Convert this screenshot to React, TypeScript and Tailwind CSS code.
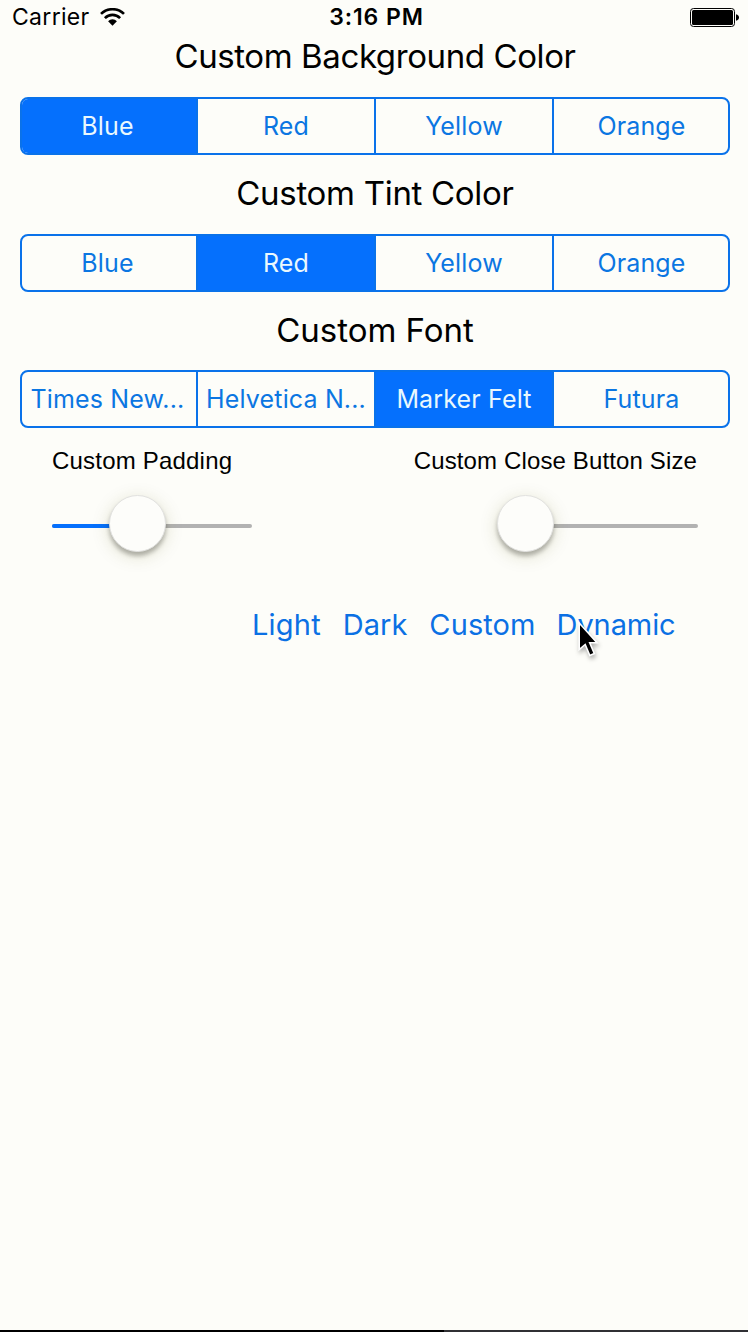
import React from "react";

type SegmentedProps = { items: string[]; selected: number };

function Segmented({ items, selected }: SegmentedProps) {
  return (
    <div className="mx-5 flex h-[58px] w-[710px] shrink-0 overflow-hidden rounded-[8px] border-2 border-[#0a72ea]">
      {items.map((item, i) => (
        <button
          key={item}
          className={
            "flex h-full items-center justify-center whitespace-nowrap text-[25px] leading-none tracking-[0.15px] " +
            (i === 0 ? "w-[174px] pr-[3px] " : i === 3 ? "w-[176px] border-l-2 border-[#0a72ea] pl-px " : "w-[178px] border-l-2 border-[#0a72ea] ") +
            (i === selected ? "bg-[#0570fd] text-[#eaf8fd]" : "text-[#0b76e2]")
          }
        >
          {item}
        </button>
      ))}
    </div>
  );
}

function Title({ children, className }: { children: string; className: string }) {
  return (
    <h2 className={"flex h-10 shrink-0 items-center justify-center whitespace-nowrap pl-[2px] text-[33px] leading-none text-black " + className}>
      {children}
    </h2>
  );
}

function Knob({ className }: { className: string }) {
  return (
    <div
      className={
        "absolute top-[7px] h-[57px] w-[57px] rounded-full border border-[#e2e2e0] bg-[#fdfdfa] shadow-[0_4px_4px_rgba(0,0,0,0.26),0_4px_18px_rgba(90,90,0,0.18)] " +
        className
      }
    />
  );
}

export default function App() {
  return (
    <main className="relative flex h-[1332px] w-[748px] flex-col overflow-hidden bg-[#fdfdf9] font-['Inter',sans-serif]">
      <header className="flex h-[34px] shrink-0 items-center pl-3 pr-[9px] text-[23px] leading-none text-black">
        <div className="flex flex-1 items-center gap-[10px]">
          <span className="tracking-[0.3px]">Carrier</span>
          <svg width="25" height="18" viewBox="0 0 25 18" fill="none" stroke="#000">
            <path d="M1 5.900a16.500 16.500 0 0 1 23 0" strokeWidth="2.700" />
            <path d="M4.900 10.100a10.800 10.800 0 0 1 15.200 0" strokeWidth="2.700" />
            <path d="M12.500 17.700L8.100 13.200a6.200 6.200 0 0 1 8.800 0z" fill="#000" stroke="none" />
          </svg>
        </div>
        <span className="pl-[2px] font-semibold tracking-[0.900px]">3:16 PM</span>
        <div className="flex flex-1 justify-end">
          <svg width="49" height="19" viewBox="0 0 49 19">
            <rect x="0.5" y="0.5" width="44" height="18" rx="3" fill="none" stroke="#000" />
            <rect x="2" y="2" width="41" height="15" rx="1.5" fill="#000" />
            <path d="M46 6.2c4 .8 4 5.800 0 6.600z" fill="#000" />
          </svg>
        </div>
      </header>

      <Title className="mt-[2px] tracking-[-0.4px]">Custom Background Color</Title>
      <div className="mt-[21px]">
        <Segmented items={["Blue", "Red", "Yellow", "Orange"]} selected={0} />
      </div>
      <Title className="mt-[18px] tracking-[-0.3px]">Custom Tint Color</Title>
      <div className="mt-[21px]">
        <Segmented items={["Blue", "Red", "Yellow", "Orange"]} selected={1} />
      </div>
      <Title className="mt-[18px]">Custom Font</Title>
      <div className="mt-[20px]">
        <Segmented items={["Times New...", "Helvetica N...", "Marker Felt", "Futura"]} selected={2} />
      </div>

      <div className="mt-[17px] flex h-8 justify-between pl-[52px] pr-[51px] font-['Liberation_Sans',sans-serif] text-[24px] leading-8 text-black">
        <span className="tracking-[0.2px]">Custom Padding</span>
        <span className="tracking-[0.13px]">Custom Close Button Size</span>
      </div>

      <div className="mt-[11px] flex h-[76px] justify-between pl-[52px] pr-[50px]">
        <div className="relative w-[200px] pt-9">
          <div className="flex h-1 overflow-hidden rounded-full bg-[#b2b2b2]">
            <div className="w-[85px] bg-[#0570fd]" />
          </div>
          <Knob className="left-[57px]" />
        </div>
        <div className="relative w-[200px] pt-9">
          <div className="h-1 rounded-full bg-[#b2b2b2]" />
          <Knob className="left-[-1px]" />
        </div>
      </div>

      <nav className="mt-[40px] flex h-10 items-center gap-[22px] pl-[252px] text-[29px] leading-none text-[#0b70e4]">
        <button className="tracking-[0.2px]">Light</button>
        <button>Dark</button>
        <button className="tracking-[0.1px]">Custom</button>
        <button className="-ml-px tracking-[-0.1px]">Dynamic</button>
      </nav>

      <svg className="absolute left-[575px] top-[620px] drop-shadow-[1px_3px_2px_rgba(0,0,0,0.3)]" width="28" height="40" viewBox="0 0 28 40">
        <path d="M4.200 3V29.500L10.200 24.500L14.800 35.500L19.300 33.500L14.700 22.800H22Z" fill="#000" stroke="#fff" strokeWidth="1.600" />
      </svg>

      <div className="mt-auto flex h-[2px] shrink-0">
        <div className="w-[444px] bg-black" />
        <div className="flex-1 bg-[#303034]" />
      </div>
    </main>
  );
}
